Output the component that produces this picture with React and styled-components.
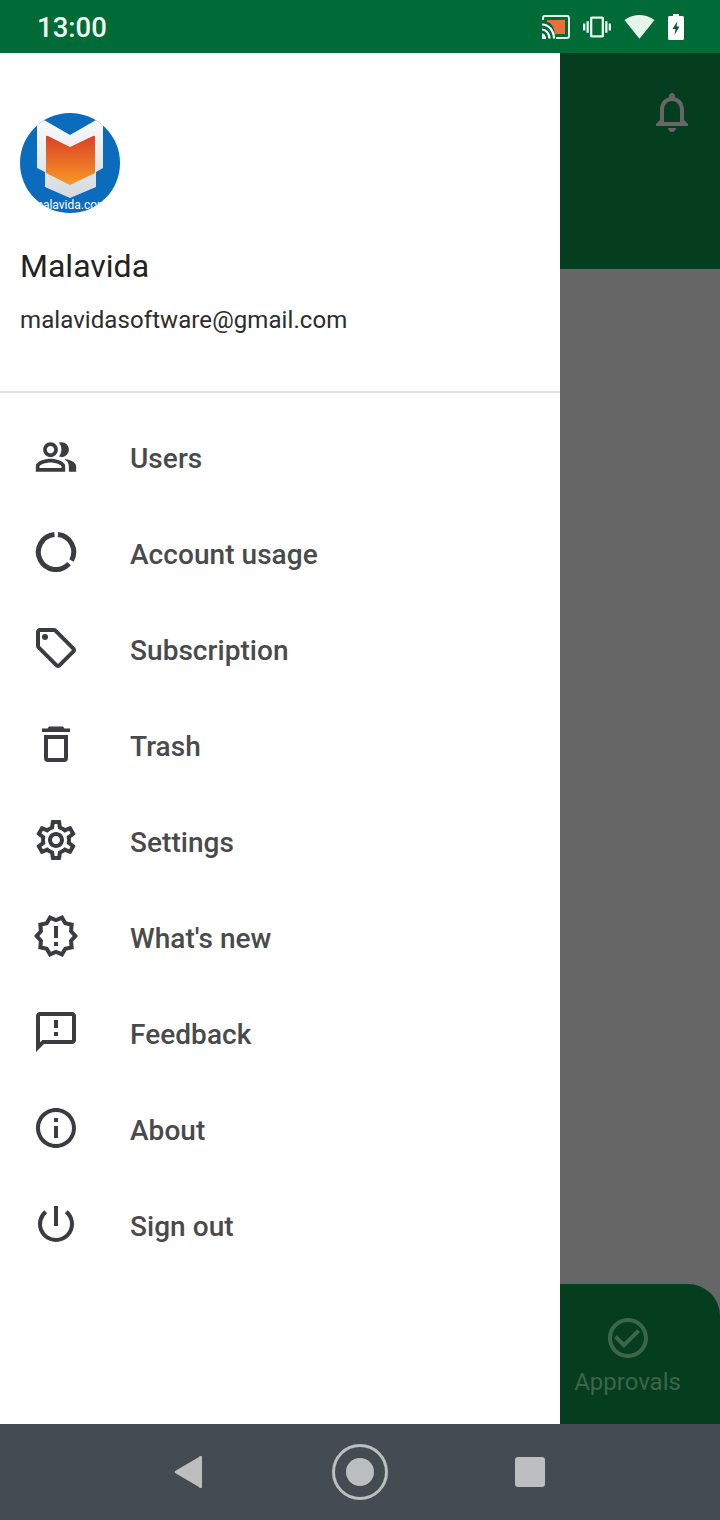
import React from 'react'
import styled, { createGlobalStyle } from 'styled-components'
import {
	MdOutlinePeopleAlt,
	MdOutlineLocalOffer,
	MdOutlineSettings,
	MdOutlineNewReleases,
	MdOutlineFeedback,
	MdInfoOutline,
	MdOutlinePowerSettingsNew,
	MdNotificationsNone,
	MdCheckCircleOutline,
	MdVibration,
	MdSignalWifi4Bar,
} from 'react-icons/md'

const GlobalStyle = createGlobalStyle`
	html, body {
		margin: 0;
		padding: 0;
		background: #666;
		font-family: Roboto, "Liberation Sans", sans-serif;
	}
	* { box-sizing: border-box; }
`

//
const UsageIcon = () => (
	<svg viewBox="0 0 48 48" width="48" height="48" fill="none" stroke="currentColor" strokeWidth="5">
		<path d="M22.5 6.6 A17.5 17.5 0 1 0 37 35.6" />
		<path d="M26 6.6 A17.5 17.5 0 0 1 39.500 32.500" />
	</svg>
)

//
const TrashIcon = () => (
	<svg viewBox="0 0 48 48" width="48" height="48" fill="currentColor">
		<path d="M17 6.5h14l1.5 2H38v3.4H10V8.500h5.500z" />
		<path d="M12 15h24v23a4 4 0 0 1-4 4H16a4 4 0 0 1-4-4zm4 4v19h16V19z" fillRule="evenodd" />
	</svg>
)

// users icon in the reference is a little narrower than the 48px box
const UsersIcon = () => (
	<UsersBox>
		<MdOutlinePeopleAlt size={44} />
	</UsersBox>
)

//
const CastIcon = () => (
	<svg viewBox="0 0 28 24" width="28" height="24">
		<path d="M5 5h18v14H13C12 12 10 8 5 7z" fill="#f26b3a" />
		<path
			d="M1 5V3a2 2 0 0 1 2-2h22a2 2 0 0 1 2 2v18a2 2 0 0 1-2 2H14"
			fill="none"
			stroke="#dff3e6"
			strokeWidth="2"
		/>
		<g fill="none" stroke="#fff" strokeWidth="2.200">
			<path d="M0 9.500c6.500 0 12 6 12 14" />
			<path d="M0 14.500c4 0 7.500 4 7.500 9" />
		</g>
		<path d="M0 18.500c2.500 0 4 2.500 4 5.500H0z" fill="#fff" />
	</svg>
)

//
const BatteryIcon = () => (
	<svg viewBox="0 0 16 26" width="16" height="26">
		<path
			d="M5 0h6v2h3.500A1.500 1.500 0 0 1 16 3.500v21a1.500 1.500 0 0 1-1.500 1.500h-13A1.500 1.500 0 0 1 0 24.500v-21A1.500 1.500 0 0 1 1.500 2H5z"
			fill="#fff"
		/>
		<path d="M9.500 7 L4.500 15 H7.500 L6.500 21 L11.500 12.500 H8.500z" fill="#0a5a30" />
	</svg>
)

//
const Logo = () => (
	<LogoSvg viewBox="0 0 100 100">
		<defs>
			<clipPath id="logoClip">
				<circle cx="50" cy="50" r="50" />
			</clipPath>
			<linearGradient id="logoFlame" x1="0" y1="0" x2="0" y2="1">
				<stop offset="0" stopColor="#dc3f27" />
				<stop offset="1" stopColor="#f69a25" />
			</linearGradient>
			<linearGradient id="logoShield" x1="0" y1="0" x2="0" y2="1">
				<stop offset="0" stopColor="#fafafa" />
				<stop offset="1" stopColor="#d5d9de" />
			</linearGradient>
		</defs>
		<g clipPath="url(#logoClip)">
			<rect width="100" height="100" fill="#0b6cbd" />
			<path d="M17 9 L24 7 L50 22 L76 7 L83 9 V55 L76 59 V74 L50 85 L25 74 V59 L17 55Z" fill="url(#logoShield)" />
			<path d="M26 24 Q26 22 28 23 L50 34 L73 23 Q75 22 75 24 V60 L50 72 L26 60Z" fill="url(#logoFlame)" />
			<LogoText x="50" y="96">malavida.com</LogoText>
		</g>
	</LogoSvg>
)

const menuItems = [
	{ label: 'Users', Icon: UsersIcon },
	{ label: 'Account usage', Icon: UsageIcon },
	{ label: 'Subscription', Icon: MdOutlineLocalOffer },
	{ label: 'Trash', Icon: TrashIcon },
	{ label: 'Settings', Icon: MdOutlineSettings },
	{ label: "What's new", Icon: MdOutlineNewReleases },
	{ label: 'Feedback', Icon: MdOutlineFeedback },
	{ label: 'About', Icon: MdInfoOutline },
	{ label: 'Sign out', Icon: MdOutlinePowerSettingsNew },
]

//
const App = () => (
	<Screen>
		<GlobalStyle />
		<StatusBar>
			<Clock>13:00</Clock>
			<StatusIcons>
				<CastIcon />
				<MdVibration size={28} />
				<MdSignalWifi4Bar size={31} />
				<BatteryIcon />
			</StatusIcons>
		</StatusBar>

		<Content>
			<Drawer>
				<DrawerHeader>
					<Logo />
					<UserName>Malavida</UserName>
					<UserEmail>malavidasoftware@gmail.com</UserEmail>
				</DrawerHeader>
				<Menu>
					{menuItems.map(({ label, Icon }) => (
						<MenuItem key={label}>
							<MenuIcon>
								<Icon size={48} />
							</MenuIcon>
							<span>{label}</span>
						</MenuItem>
					))}
				</Menu>
			</Drawer>

			<Behind>
				<AppBar>
					<MdNotificationsNone size={48} />
				</AppBar>
				<Spacer />
				<Tab>
					<MdCheckCircleOutline size={48} />
					<TabLabel>Approvals</TabLabel>
				</Tab>
			</Behind>
		</Content>

		<NavBar>
			<BackButton viewBox="0 0 28 32">
				<path
					d="M25 1a1.500 1.500 0 0 1 3 1v28a1.500 1.500 0 0 1-3 1L1.500 17.300a1.500 1.500 0 0 1 0-2.600z"
					fill="#bcbfc0"
				/>
			</BackButton>
			<HomeButton>
				<HomeDot />
			</HomeButton>
			<RecentButton />
		</NavBar>
	</Screen>
)

export default App

const Screen = styled.div`
	width: 720px;
	height: 1520px;
	display: flex;
	flex-direction: column;
	overflow: hidden;
`

const StatusBar = styled.div`
	height: 53px;
	flex: none;
	background: #006b36;
	display: flex;
	align-items: center;
	justify-content: space-between;
	padding: 0 36px 0 37px;
	color: #fff;
`

const Clock = styled.div`
	font-size: 27.5px;
	font-weight: 500;
	color: #f1f8f3;
	padding-top: 1px;
`

const StatusIcons = styled.div`
	display: flex;
	align-items: center;
	gap: 13px;
	color: #e6f5eb;
`

const Content = styled.div`
	flex: 1;
	display: flex;
	min-height: 0;
`

const Drawer = styled.div`
	width: 560px;
	flex: none;
	background: #fff;
`

const DrawerHeader = styled.div`
	height: 340px;
	padding: 60px 0 0 20px;
	border-bottom: 2px solid #e2e2e2;
`

const LogoSvg = styled.svg`
	width: 100px;
	height: 100px;
	display: block;
`

const LogoText = styled.text`
	font-family: Roboto, sans-serif;
	font-size: 12px;
	fill: #fff;
	text-anchor: middle;
`

const UserName = styled.div`
	margin-top: 32px;
	font-size: 32px;
	line-height: 42px;
	color: #222;
`

const UserEmail = styled.div`
	margin-top: 19px;
	font-size: 24px;
	line-height: 28px;
	letter-spacing: 0.08px;
	color: #2c2c2c;
`

const Menu = styled.div`
	padding-top: 17px;
`

const MenuItem = styled.div`
	height: 96px;
	display: flex;
	align-items: center;
	gap: 50px;
	padding-left: 32px;
	font-size: 28px;
	font-weight: 500;
	letter-spacing: 0.05px;
	color: #484a4c;
`

const MenuIcon = styled.div`
	width: 48px;
	height: 48px;
	flex: none;
	color: #3a3c3f;
	transform: translateY(-2px);
	svg {
		display: block;
	}
`

const UsersBox = styled.div`
	width: 48px;
	height: 48px;
	display: flex;
	align-items: center;
	justify-content: center;
	transform: translateY(1px);
`

const Behind = styled.div`
	flex: 1;
	display: flex;
	flex-direction: column;
	background: #666;
`

const AppBar = styled.div`
	height: 216px;
	background: #053e1e;
	color: #666;
	display: flex;
	justify-content: flex-end;
	padding: 35px 24px 0 0;
`

const Spacer = styled.div`
	flex: 1;
`

const Tab = styled.div`
	height: 140px;
	background: #053e1e;
	border-top-right-radius: 32px;
	display: flex;
	flex-direction: column;
	align-items: center;
	padding: 30px 25px 0 0;
	color: #3c6549;
`

const TabLabel = styled.div`
	margin-top: 6px;
	font-size: 24px;
	line-height: 28px;
`

const NavBar = styled.div`
	height: 96px;
	flex: none;
	background: #444b51;
	display: flex;
	align-items: center;
	gap: 127px;
	padding-left: 174px;
`

const BackButton = styled.svg`
	width: 28px;
	height: 32px;
	margin-right: 3px;
`

const HomeButton = styled.div`
	width: 56px;
	height: 56px;
	border-radius: 50%;
	border: 3px solid #bcbfc0;
	display: flex;
	align-items: center;
	justify-content: center;
`

const HomeDot = styled.div`
	width: 28px;
	height: 28px;
	border-radius: 50%;
	background: #bcbfc0;
`

const RecentButton = styled.div`
	width: 30px;
	height: 30px;
	border-radius: 3px;
	background: #bcbfc0;
`
